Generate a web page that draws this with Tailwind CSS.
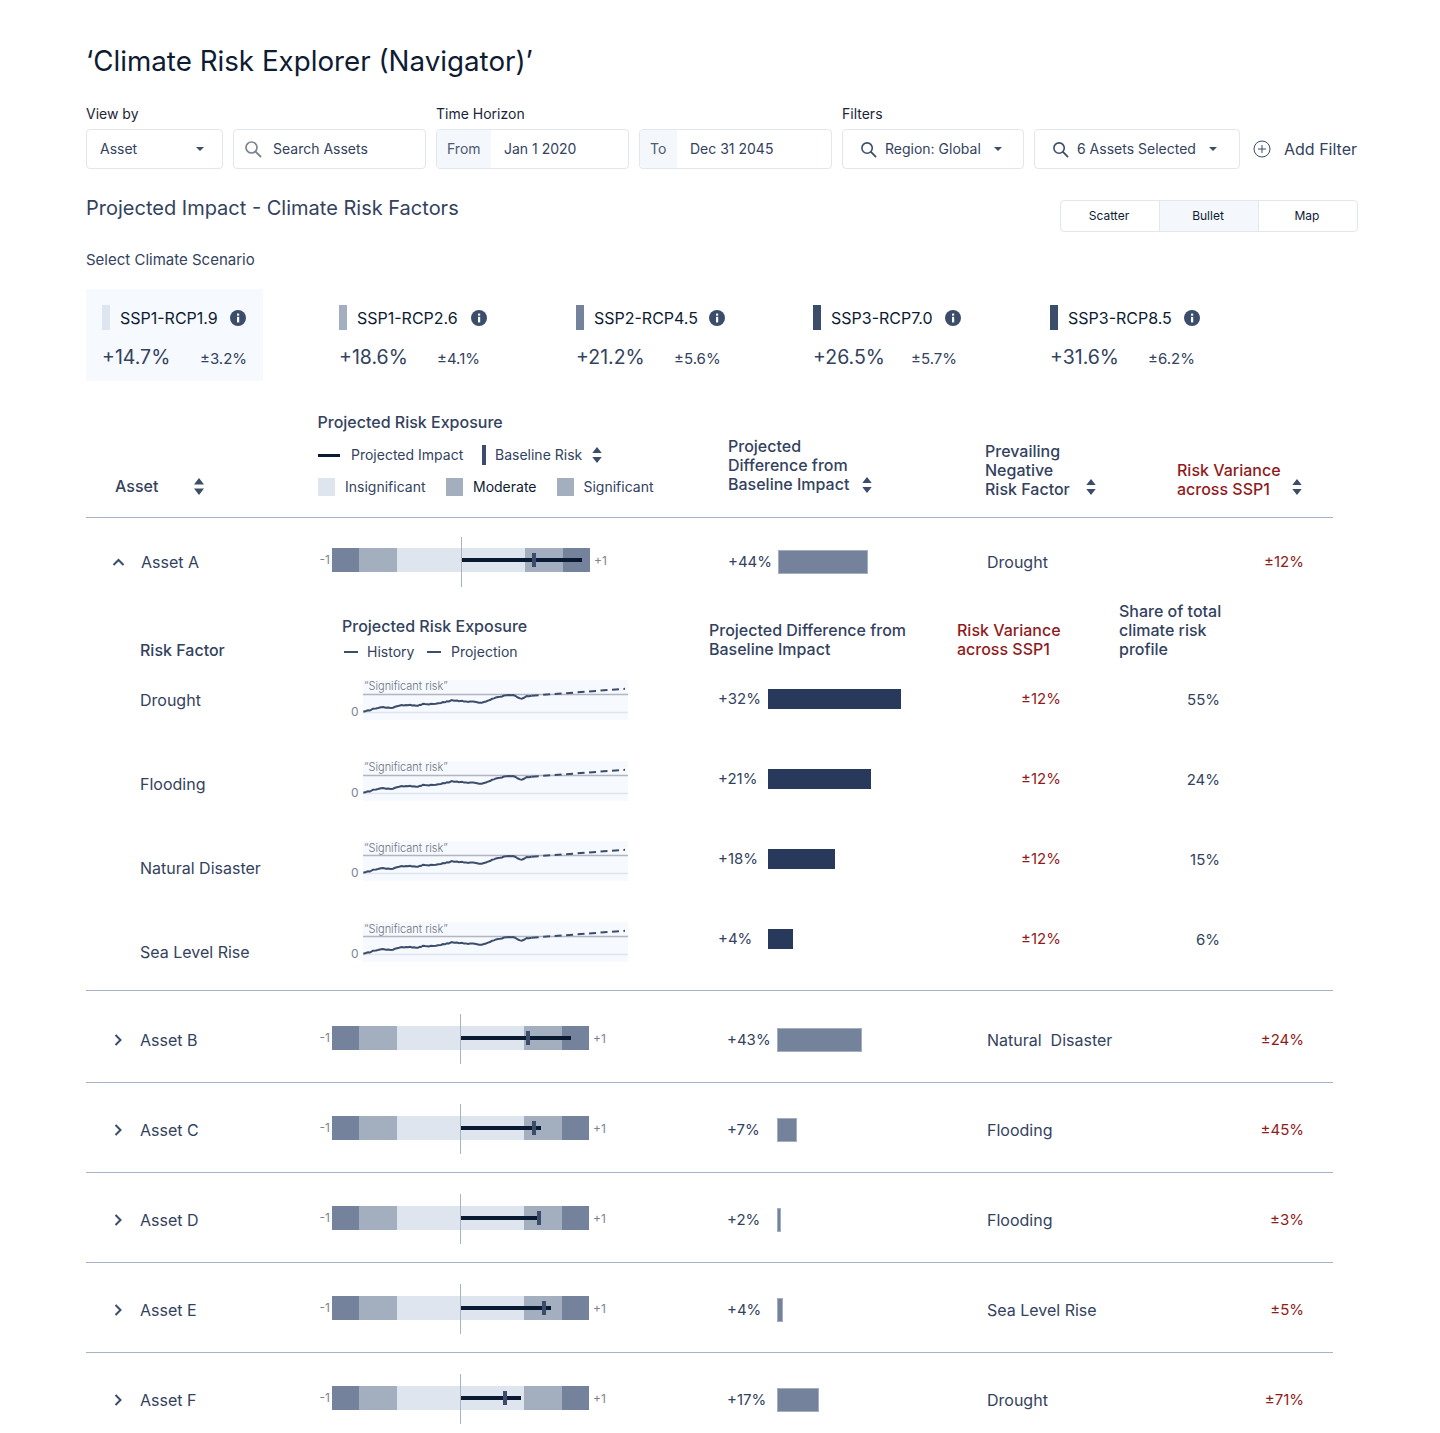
<!DOCTYPE html>
<html lang="en"><head><meta charset="utf-8"><title>Climate Risk Explorer</title>
<script src="https://cdn.jsdelivr.net/npm/@tailwindcss/browser@4"></script></head>
<body class="bg-white">
<svg class="hidden" width="0" height="0">
<defs>
<symbol id="search" viewBox="0 0 18 18"><circle cx="7.5" cy="7.500" r="5.500" fill="none" stroke="currentColor" stroke-width="1.700"/><path d="M11.600 11.600 16.500 16.500" stroke="currentColor" stroke-width="1.900" stroke-linecap="round"/></symbol>
<symbol id="caret" viewBox="0 0 10 6"><path d="M1 1h8L5 5z" fill="currentColor"/></symbol>
<symbol id="sort" viewBox="0 0 10 17"><path d="M5 0 10 6.500H0zM0 10.500H10L5 17z" fill="currentColor"/></symbol>
<symbol id="info" viewBox="0 0 16 16"><circle cx="8" cy="8" r="8" fill="#3b4d6b"/><rect x="7" y="6.800" width="2.200" height="5.600" fill="#fff"/><rect x="7" y="3.600" width="2.200" height="2" fill="#fff"/></symbol>
<symbol id="right" viewBox="0 0 12 14"><path d="M3.500 2 8.500 7l-5 5" fill="none" stroke="#3b4d6b" stroke-width="2"/></symbol>
<symbol id="spark" viewBox="0 0 265 40"><path d="M0 14.500H265" stroke="#b1b6c0" stroke-width="1.500"/><path d="M0 32.500H265" stroke="#dfe5ef" stroke-width="1.500"/><path d="M.3 31.700 3 31 5 30.300 7 30.500 10 28.700 13 28.400 15 28 18 27.300 20 27 23 27.800 25 27.600 28 28 30 27.700 32 26.800 34 26.300 36 25.800 38.700 25 41 25.400 43 25 45 25.300 47 24.700 49 25.500 51 25.200 53 25.800 55 25.700 57 24.700 58 25 60 23.700 62 24 64 24.200 66 24.500 68 23.700 70 24 73 23.800 75 23.200 78 23 80 22 82 22.300 84 21.200 86 21.400 88.700 20 91 20.800 94 20.600 96 21.200 99 20.800 101 21.600 103 21.400 105 22 107 21.600 110 21.600 113 22 116 22.800 118.700 22.700 121 22 123 21.500 125 20.600 127 20 129 18.800 131 18.400 133 17.400 135 17 137 16.800 139 16.500 141 15.500 143.700 15.300 146 15.100 148 15.300 150 15.100 152 15.700 155 17.500 157 18.400 158.700 18.700 161 17.800 163.700 16 166 16.200 168.700 15.700" fill="none" stroke="#3b4d6b" stroke-width="2"/><path d="M168.700 15.700 262 8.800" fill="none" stroke="#3b4d6b" stroke-width="2" stroke-dasharray="7 4.500"/></symbol>
</defs></svg>
<div class="w-[1440px] h-[1433px] overflow-hidden pl-[86px] pt-[43px] text-[#33425e] font-['Inter',sans-serif]">

<h1 class="h-9 text-[27.75px] leading-9 text-[#0d1b33] font-normal">‘Climate Risk Explorer (Navigator)’</h1>

<div class="flex mt-[25px] w-[1272px] text-sm">
  <div class="w-[350px]">
    <div class="h-5 mb-[5px] text-[#1b2537]">View by</div>
    <div class="flex gap-[10px]">
      <div class="w-[137px] h-10 border border-[#e2e6ee] rounded flex items-center pl-[13px] pr-[17px] justify-between"><span>Asset</span><svg class="w-[10px] h-[6px] text-[#3b4d6b]"><use href="#caret"/></svg></div>
      <div class="w-[193px] h-10 border border-[#e2e6ee] rounded flex items-center pl-[10px] gap-[11px]"><svg class="w-[18px] h-[18px] text-[#7c8490]"><use href="#search"/></svg><span>Search Assets</span></div>
    </div>
  </div>
  <div class="w-[406px]">
    <div class="h-5 mb-[5px] text-[#1b2537]">Time Horizon</div>
    <div class="flex gap-[10px]">
      <div class="w-[193px] h-10 border border-[#e2e6ee] rounded flex items-center overflow-hidden"><span class="h-full w-[54px] bg-[#f4f7fc] flex items-center pl-[10px] text-[#4c5a72]">From</span><span class="ml-[13px]">Jan 1 2020</span></div>
      <div class="w-[193px] h-10 border border-[#e2e6ee] rounded flex items-center overflow-hidden"><span class="h-full w-[37px] bg-[#f4f7fc] flex items-center pl-[10px] text-[#4c5a72]">To</span><span class="ml-[13px]">Dec 31 2045</span></div>
    </div>
  </div>
  <div class="flex-1">
    <div class="h-5 mb-[5px] text-[#1b2537]">Filters</div>
    <div class="flex items-center">
      <div class="w-[182px] h-10 border border-[#e2e6ee] rounded flex items-center pl-[17px]"><svg class="w-[17px] h-[17px] text-[#3b4d6b]"><use href="#search"/></svg><span class="ml-[8px]">Region: Global</span><svg class="ml-[12px] w-[10px] h-[6px] text-[#3b4d6b]"><use href="#caret"/></svg></div>
      <div class="ml-[10px] w-[206px] h-10 border border-[#e2e6ee] rounded flex items-center pl-[17px]"><svg class="w-[17px] h-[17px] text-[#3b4d6b]"><use href="#search"/></svg><span class="ml-[8px]">6 Assets Selected</span><svg class="ml-[12px] w-[10px] h-[6px] text-[#3b4d6b]"><use href="#caret"/></svg></div>
      <svg class="ml-[13px] w-[18px] h-[18px]" viewBox="0 0 18 18"><circle cx="9" cy="9" r="8" fill="none" stroke="#3b4d6b"/><path d="M9 5v8M5 9h8" stroke="#3b4d6b"/></svg>
      <span class="ml-[13px] text-base">Add Filter</span>
    </div>
  </div>
</div>

<div class="flex justify-between w-[1272px] mt-[27px]">
  <h2 class="text-xl leading-6 font-normal h-6">Projected Impact - Climate Risk Factors</h2>
  <div class="mt-1 flex w-[298px] h-8 border border-[#e2e6ee] rounded text-xs text-[#0d1b33]">
    <div class="flex-1 flex items-center justify-center pr-[2px]">Scatter</div>
    <div class="flex-1 flex items-center justify-center pr-[2px] bg-[#f4f7fc] border-x border-[#e2e6ee]">Bullet</div>
    <div class="flex-1 flex items-center justify-center pr-[2px]">Map</div>
  </div>
</div>

<div class="mt-[18px] h-5 text-[15px] leading-5">Select Climate Scenario</div>

<div class="flex mt-[19px] h-[92px]">
  <div class="w-[237px]"><div class="w-[177px] h-full bg-[#f6f9fe] pl-4 pt-4">
    <div class="flex items-center h-[25px]"><span class="w-2 h-[25px] bg-[#dfe5ef]"></span><span class="ml-[10px] w-[110px] text-base text-[#0d1b33]">SSP1-RCP1.9</span><svg class="w-4 h-4"><use href="#info"/></svg></div>
    <div class="flex items-center mt-[14px] h-[28px]"><span class="w-[98px] text-[19.500px]">+14.7%</span><span class="text-[15px] mt-[3px]">±3.2%</span></div>
  </div></div>
  <div class="w-[237px]"><div class="h-full pl-4 pt-4">
    <div class="flex items-center h-[25px]"><span class="w-2 h-[25px] bg-[#a3afbf]"></span><span class="ml-[10px] w-[114px] text-base text-[#0d1b33]">SSP1-RCP2.6</span><svg class="w-4 h-4"><use href="#info"/></svg></div>
    <div class="flex items-center mt-[14px] h-[28px]"><span class="w-[98px] text-[19.500px]">+18.6%</span><span class="text-[15px] mt-[3px]">±4.1%</span></div>
  </div></div>
  <div class="w-[237px]"><div class="h-full pl-4 pt-4">
    <div class="flex items-center h-[25px]"><span class="w-2 h-[25px] bg-[#74839b]"></span><span class="ml-[10px] w-[115px] text-base text-[#0d1b33]">SSP2-RCP4.5</span><svg class="w-4 h-4"><use href="#info"/></svg></div>
    <div class="flex items-center mt-[14px] h-[28px]"><span class="w-[98px] text-[19.500px]">+21.2%</span><span class="text-[15px] mt-[3px]">±5.6%</span></div>
  </div></div>
  <div class="w-[237px]"><div class="h-full pl-4 pt-4">
    <div class="flex items-center h-[25px]"><span class="w-2 h-[25px] bg-[#3b4d6b]"></span><span class="ml-[10px] w-[114px] text-base text-[#0d1b33]">SSP3-RCP7.0</span><svg class="w-4 h-4"><use href="#info"/></svg></div>
    <div class="flex items-center mt-[14px] h-[28px]"><span class="w-[98px] text-[19.500px]">+26.5%</span><span class="text-[15px] mt-[3px]">±5.7%</span></div>
  </div></div>
  <div class="w-[237px]"><div class="h-full pl-4 pt-4">
    <div class="flex items-center h-[25px]"><span class="w-2 h-[25px] bg-[#3b4d6b]"></span><span class="ml-[10px] w-[116px] text-base text-[#0d1b33]">SSP3-RCP8.5</span><svg class="w-4 h-4"><use href="#info"/></svg></div>
    <div class="flex items-center mt-[14px] h-[28px]"><span class="w-[98px] text-[19.500px]">+31.6%</span><span class="text-[15px] mt-[3px]">±6.2%</span></div>
  </div></div>
</div>

<!-- table header -->
<div class="flex w-[1247px] h-[137px] border-b border-[#a5b3c5] text-base">
  <div class="w-[232px] pl-[29px] self-end pb-[19px] flex items-center font-medium text-[#33425e] h-[43px]"><span class="w-[79px]">Asset</span><svg class="w-[10px] h-[17px] text-[#3b4d6b]"><use href="#sort"/></svg></div>
  <div class="w-[410px] pt-[29px]">
    <div class="h-6 leading-6 font-medium ml-[-0.500px]">Projected Risk Exposure</div>
    <div class="flex items-center h-5 mt-[11px] text-sm"><span class="w-[22px] h-[3px] bg-[#0b1a33]"></span><span class="ml-[11px] w-[131px]">Projected Impact</span><span class="w-1 h-5 bg-[#3b4d6b]"></span><span class="ml-[9px] w-[96px]">Baseline Risk</span><svg class="ml-[1px] w-[10px] h-[16px] text-[#3b4d6b]"><use href="#sort"/></svg></div>
    <div class="flex items-center h-5 mt-3 text-sm"><span class="w-[17px] h-[18px] bg-[#dfe5ef]"></span><span class="ml-[10px] w-[101px]">Insignificant</span><span class="w-[17px] h-[18px] bg-[#a3afbf]"></span><span class="ml-[10px] w-[84px] text-[#0d1b33]">Moderate</span><span class="w-[17px] h-[18px] bg-[#a3afbf]"></span><span class="ml-[9.500px]">Significant</span></div>
  </div>
  <div class="w-[257px] self-end pb-[23px] leading-[19px] font-medium text-[#33425e]">
    <div>Projected</div><div>Difference from</div><div class="flex items-center">Baseline Impact<svg class="ml-[13px] w-[10px] h-[16px] text-[#3b4d6b]"><use href="#sort"/></svg></div>
  </div>
  <div class="w-[192px] self-end pb-[18px] leading-[19px] font-medium text-[#33425e]">
    <div>Prevailing</div><div>Negative</div><div class="flex items-center">Risk Factor<svg class="ml-[16px] mt-[-6px] w-[10px] h-[16px] text-[#3b4d6b]"><use href="#sort"/></svg></div>
  </div>
  <div class="flex-1 self-end pb-[18px] leading-[19px] font-medium text-[#8f1c1c]">
    <div>Risk Variance</div><div class="flex items-center">across SSP1<svg class="ml-[22px] mt-[-6px] w-[10px] h-[16px] text-[#3b4d6b]"><use href="#sort"/></svg></div>
  </div>
</div>

<!-- Asset A -->
<div class="w-[1247px] h-[473px] border-b border-[#a5b3c5]">
  <div class="flex h-[82px] items-start">
    <div class="w-[232px] pl-[26px] pt-8 flex items-center h-14"><svg class="w-[13px] h-[9px]" viewBox="0 0 13 9"><path d="M1.500 7 6.500 2l5 5" fill="none" stroke="#3b4d6b" stroke-width="2"/></svg><span class="ml-4">Asset A</span></div>
    <div class="w-[410px] pt-[30px] flex items-center h-[54px] pl-[1.500px] text-xs text-[#7c8490]">
      <span class="w-[12.500px]">-1</span>
      <div class="relative w-[258px] h-6 flex"><i class="w-[27px] bg-[#74839b]"></i><i class="w-[38px] bg-[#a3afbf]"></i><i class="w-[128px] bg-[#dfe5ef]"></i><i class="w-[38px] bg-[#a3afbf]"></i><i class="flex-1 bg-[#74839b]"></i>
        <i class="absolute left-[129px] top-[-11px] w-px h-[50px] bg-[#a5b3c5]"></i><i class="absolute left-[130px] top-[10px] w-[120px] h-1 bg-[#0b1a33]"></i><i class="absolute left-[200px] top-[5px] w-1 h-[14px] bg-[#3b4d6b]"></i></div>
      <span class="ml-1 mt-[2px]">+1</span>
    </div>
    <div class="w-[259px] pt-[32px] flex items-center h-14"><span class="w-[50px] text-[15px]">+44%</span><span class="w-[90px] h-6 bg-[#74839b] border border-[#a3afbf]"></span></div>
    <div class="w-[190px] pt-[32px] h-14 flex items-center">Drought</div>
    <div class="w-[127px] pt-[32px] h-14 flex items-center justify-end text-[15px] text-[#8f1c1c]">±12%</div>
  </div>
  <div class="flex h-[390px]">
    <div class="w-[202px] ml-[54px] leading-6">
      <div class="pt-[38px] font-medium">Risk Factor</div>
      <div class="mt-[26px]">Drought</div>
      <div class="mt-[60px]">Flooding</div>
      <div class="mt-[60px]">Natural Disaster</div>
      <div class="mt-[60px]">Sea Level Rise</div>
    </div>
    <div class="w-[367px]">
      <div class="pt-[14px] h-[38px] leading-6 font-medium">Projected Risk Exposure</div>
      <div class="flex items-center h-7 text-sm"><span class="ml-0.5 w-[14px] h-0.5 bg-[#3b4d6b]"></span><span class="ml-[9px] w-[60px]">History</span><span class="w-[14px] h-0.5 bg-[#3b4d6b]"></span><span class="ml-[10px]">Projection</span></div>
      <div class="flex ml-[9px] mt-[14px] h-10"><span class="w-3 self-end text-xs text-[#7c8490] leading-[14px] mb-[1px]">0</span><div class="relative w-[265px] h-10 bg-[#f6f9fe]"><svg class="block w-[265px] h-10"><use href="#spark"/></svg><span class="absolute left-px top-[-1px] text-[11px] leading-[14px] font-light text-[#6d7480]">“Significant risk”</span></div></div>
      <div class="flex ml-[9px] mt-[41px] h-10"><span class="w-3 self-end text-xs text-[#7c8490] leading-[14px] mb-[1px]">0</span><div class="relative w-[265px] h-10 bg-[#f6f9fe]"><svg class="block w-[265px] h-10"><use href="#spark"/></svg><span class="absolute left-px top-[-1px] text-[11px] leading-[14px] font-light text-[#6d7480]">“Significant risk”</span></div></div>
      <div class="flex ml-[9px] mt-10 h-10"><span class="w-3 self-end text-xs text-[#7c8490] leading-[14px] mb-[1px]">0</span><div class="relative w-[265px] h-10 bg-[#f6f9fe]"><svg class="block w-[265px] h-10"><use href="#spark"/></svg><span class="absolute left-px top-0 text-[11px] leading-[14px] font-light text-[#6d7480]">“Significant risk”</span></div></div>
      <div class="flex ml-[9px] mt-[41px] h-10"><span class="w-3 self-end text-xs text-[#7c8490] leading-[14px] mb-[1px]">0</span><div class="relative w-[265px] h-10 bg-[#f6f9fe]"><svg class="block w-[265px] h-10"><use href="#spark"/></svg><span class="absolute left-px top-0 text-[11px] leading-[14px] font-light text-[#6d7480]">“Significant risk”</span></div></div>
    </div>
    <div class="w-[248px]">
      <div class="pt-[21px] h-[79px] leading-[19px] font-medium">Projected Difference from<br>Baseline Impact</div>
      <div class="flex items-center h-10 ml-[9px]"><span class="w-[50px] text-[15px]">+32%</span><span class="w-[133px] h-5 bg-[#28395b]"></span></div>
      <div class="flex items-center h-10 ml-[9px] mt-10"><span class="w-[50px] text-[15px]">+21%</span><span class="w-[103px] h-5 bg-[#28395b]"></span></div>
      <div class="flex items-center h-10 ml-[9px] mt-10"><span class="w-[50px] text-[15px]">+18%</span><span class="w-[67px] h-5 bg-[#28395b]"></span></div>
      <div class="flex items-center h-10 ml-[9px] mt-10"><span class="w-[50px] text-[15px]">+4%</span><span class="w-[25px] h-5 bg-[#28395b]"></span></div>
    </div>
    <div class="w-[162px]">
      <div class="pt-[21px] h-[79px] leading-[19px] font-medium text-[#8f1c1c]">Risk Variance<br>across SSP1</div>
      <div class="w-[104px] h-10 flex items-center justify-end text-[15px] text-[#8f1c1c]">±12%</div>
      <div class="w-[104px] h-10 mt-10 flex items-center justify-end text-[15px] text-[#8f1c1c]">±12%</div>
      <div class="w-[104px] h-10 mt-10 flex items-center justify-end text-[15px] text-[#8f1c1c]">±12%</div>
      <div class="w-[104px] h-10 mt-10 flex items-center justify-end text-[15px] text-[#8f1c1c]">±12%</div>
    </div>
    <div class="w-[110px]">
      <div class="pt-[2px] h-[80px] leading-[19px] font-medium">Share of total<br>climate risk<br>profile</div>
      <div class="w-[101px] h-10 flex items-center justify-end text-[15px]">55%</div>
      <div class="w-[101px] h-10 mt-10 flex items-center justify-end text-[15px]">24%</div>
      <div class="w-[101px] h-10 mt-10 flex items-center justify-end text-[15px]">15%</div>
      <div class="w-[101px] h-10 mt-10 flex items-center justify-end text-[15px]">6%</div>
    </div>
  </div>
</div>

<!-- Asset B -->
<div class="flex w-[1247px] h-[92px] pt-[2px] border-b border-[#a5b3c5] items-start">
  <div class="w-[232px] pl-[26px] pt-[35px] flex items-center h-[59px]"><svg class="w-3 h-[14px]"><use href="#right"/></svg><span class="ml-[16px]">Asset B</span></div>
  <div class="w-[409px] pt-[33px] flex items-center h-[57px] pl-[1.500px] text-xs text-[#7c8490]"><span class="w-[12.500px]">-1</span>
    <div class="relative w-[257px] h-6 flex"><i class="w-[27px] bg-[#74839b]"></i><i class="w-[38px] bg-[#a3afbf]"></i><i class="w-[127px] bg-[#dfe5ef]"></i><i class="w-[38px] bg-[#a3afbf]"></i><i class="flex-1 bg-[#74839b]"></i>
      <i class="absolute left-[128px] top-[-12px] w-px h-[50px] bg-[#a5b3c5]"></i><i class="absolute left-[129px] top-[10px] w-[110px] h-[4px] bg-[#0b1a33]"></i><i class="absolute left-[194px] top-[5px] w-1 h-[14px] bg-[#3b4d6b]"></i></div>
    <span class="ml-1 mt-[2px]">+1</span></div>
  <div class="w-[260px] pt-[35px] flex items-center h-[59px]"><span class="w-[50px] text-[15px]">+43%</span><span class="w-[85px] h-6 bg-[#74839b] border border-[#a3afbf]"></span></div>
  <div class="w-[190px] pt-[35px] h-[59px] flex items-center">Natural&nbsp; Disaster</div>
  <div class="w-[127px] pt-[35px] h-[59px] flex items-center justify-end text-[15px] text-[#8f1c1c]">±24%</div>
</div>

<!-- Asset C -->
<div class="flex w-[1247px] h-[90px] border-b border-[#a5b3c5] items-start">
  <div class="w-[232px] pl-[26px] pt-[35px] flex items-center h-[59px]"><svg class="w-3 h-[14px]"><use href="#right"/></svg><span class="ml-[16px]">Asset C</span></div>
  <div class="w-[409px] pt-[33px] flex items-center h-[57px] pl-[1.500px] text-xs text-[#7c8490]"><span class="w-[12.500px]">-1</span>
    <div class="relative w-[257px] h-6 flex"><i class="w-[27px] bg-[#74839b]"></i><i class="w-[38px] bg-[#a3afbf]"></i><i class="w-[127px] bg-[#dfe5ef]"></i><i class="w-[38px] bg-[#a3afbf]"></i><i class="flex-1 bg-[#74839b]"></i>
      <i class="absolute left-[128px] top-[-12px] w-px h-[50px] bg-[#a5b3c5]"></i><i class="absolute left-[129px] top-[10px] w-[80px] h-[4px] bg-[#0b1a33]"></i><i class="absolute left-[200px] top-[5px] w-1 h-[14px] bg-[#3b4d6b]"></i></div>
    <span class="ml-1 mt-[2px]">+1</span></div>
  <div class="w-[260px] pt-[35px] flex items-center h-[59px]"><span class="w-[50px] text-[15px]">+7%</span><span class="w-5 h-6 bg-[#74839b] border border-[#a3afbf]"></span></div>
  <div class="w-[190px] pt-[35px] h-[59px] flex items-center">Flooding</div>
  <div class="w-[127px] pt-[35px] h-[59px] flex items-center justify-end text-[15px] text-[#8f1c1c]">±45%</div>
</div>

<!-- Asset D -->
<div class="flex w-[1247px] h-[90px] border-b border-[#a5b3c5] items-start">
  <div class="w-[232px] pl-[26px] pt-[35px] flex items-center h-[59px]"><svg class="w-3 h-[14px]"><use href="#right"/></svg><span class="ml-[16px]">Asset D</span></div>
  <div class="w-[409px] pt-[33px] flex items-center h-[57px] pl-[1.500px] text-xs text-[#7c8490]"><span class="w-[12.500px]">-1</span>
    <div class="relative w-[257px] h-6 flex"><i class="w-[27px] bg-[#74839b]"></i><i class="w-[38px] bg-[#a3afbf]"></i><i class="w-[127px] bg-[#dfe5ef]"></i><i class="w-[38px] bg-[#a3afbf]"></i><i class="flex-1 bg-[#74839b]"></i>
      <i class="absolute left-[128px] top-[-12px] w-px h-[50px] bg-[#a5b3c5]"></i><i class="absolute left-[129px] top-[10px] w-[80px] h-[4px] bg-[#0b1a33]"></i><i class="absolute left-[205px] top-[5px] w-1 h-[14px] bg-[#3b4d6b]"></i></div>
    <span class="ml-1 mt-[2px]">+1</span></div>
  <div class="w-[260px] pt-[35px] flex items-center h-[59px]"><span class="w-[50px] text-[15px]">+2%</span><span class="w-1 h-6 bg-[#74839b] border border-[#a3afbf]"></span></div>
  <div class="w-[190px] pt-[35px] h-[59px] flex items-center">Flooding</div>
  <div class="w-[127px] pt-[35px] h-[59px] flex items-center justify-end text-[15px] text-[#8f1c1c]">±3%</div>
</div>

<!-- Asset E -->
<div class="flex w-[1247px] h-[90px] border-b border-[#a5b3c5] items-start">
  <div class="w-[232px] pl-[26px] pt-[35px] flex items-center h-[59px]"><svg class="w-3 h-[14px]"><use href="#right"/></svg><span class="ml-[16px]">Asset E</span></div>
  <div class="w-[409px] pt-[33px] flex items-center h-[57px] pl-[1.500px] text-xs text-[#7c8490]"><span class="w-[12.500px]">-1</span>
    <div class="relative w-[257px] h-6 flex"><i class="w-[27px] bg-[#74839b]"></i><i class="w-[38px] bg-[#a3afbf]"></i><i class="w-[127px] bg-[#dfe5ef]"></i><i class="w-[38px] bg-[#a3afbf]"></i><i class="flex-1 bg-[#74839b]"></i>
      <i class="absolute left-[128px] top-[-12px] w-px h-[50px] bg-[#a5b3c5]"></i><i class="absolute left-[129px] top-[10px] w-[90px] h-[4px] bg-[#0b1a33]"></i><i class="absolute left-[210px] top-[5px] w-1 h-[14px] bg-[#3b4d6b]"></i></div>
    <span class="ml-1 mt-[2px]">+1</span></div>
  <div class="w-[260px] pt-[35px] flex items-center h-[59px]"><span class="w-[50px] text-[15px]">+4%</span><span class="w-1.5 h-6 bg-[#74839b] border border-[#a3afbf]"></span></div>
  <div class="w-[190px] pt-[35px] h-[59px] flex items-center">Sea Level Rise</div>
  <div class="w-[127px] pt-[35px] h-[59px] flex items-center justify-end text-[15px] text-[#8f1c1c]">±5%</div>
</div>

<!-- Asset F -->
<div class="flex w-[1247px] h-[81px] items-start">
  <div class="w-[232px] pl-[26px] pt-[35px] flex items-center h-[59px]"><svg class="w-3 h-[14px]"><use href="#right"/></svg><span class="ml-[16px]">Asset F</span></div>
  <div class="w-[409px] pt-[33px] flex items-center h-[57px] pl-[1.500px] text-xs text-[#7c8490]"><span class="w-[12.500px]">-1</span>
    <div class="relative w-[257px] h-6 flex"><i class="w-[27px] bg-[#74839b]"></i><i class="w-[38px] bg-[#a3afbf]"></i><i class="w-[127px] bg-[#dfe5ef]"></i><i class="w-[38px] bg-[#a3afbf]"></i><i class="flex-1 bg-[#74839b]"></i>
      <i class="absolute left-[128px] top-[-12px] w-px h-[50px] bg-[#a5b3c5]"></i><i class="absolute left-[129px] top-[10px] w-[60px] h-[4px] bg-[#0b1a33]"></i><i class="absolute left-[171px] top-[5px] w-1 h-[14px] bg-[#3b4d6b]"></i></div>
    <span class="ml-1 mt-[2px]">+1</span></div>
  <div class="w-[260px] pt-[35px] flex items-center h-[59px]"><span class="w-[50px] text-[15px]">+17%</span><span class="w-[42px] h-6 bg-[#74839b] border border-[#a3afbf]"></span></div>
  <div class="w-[190px] pt-[35px] h-[59px] flex items-center">Drought</div>
  <div class="w-[127px] pt-[35px] h-[59px] flex items-center justify-end text-[15px] text-[#8f1c1c]">±71%</div>
</div>

</div>
</body></html>
